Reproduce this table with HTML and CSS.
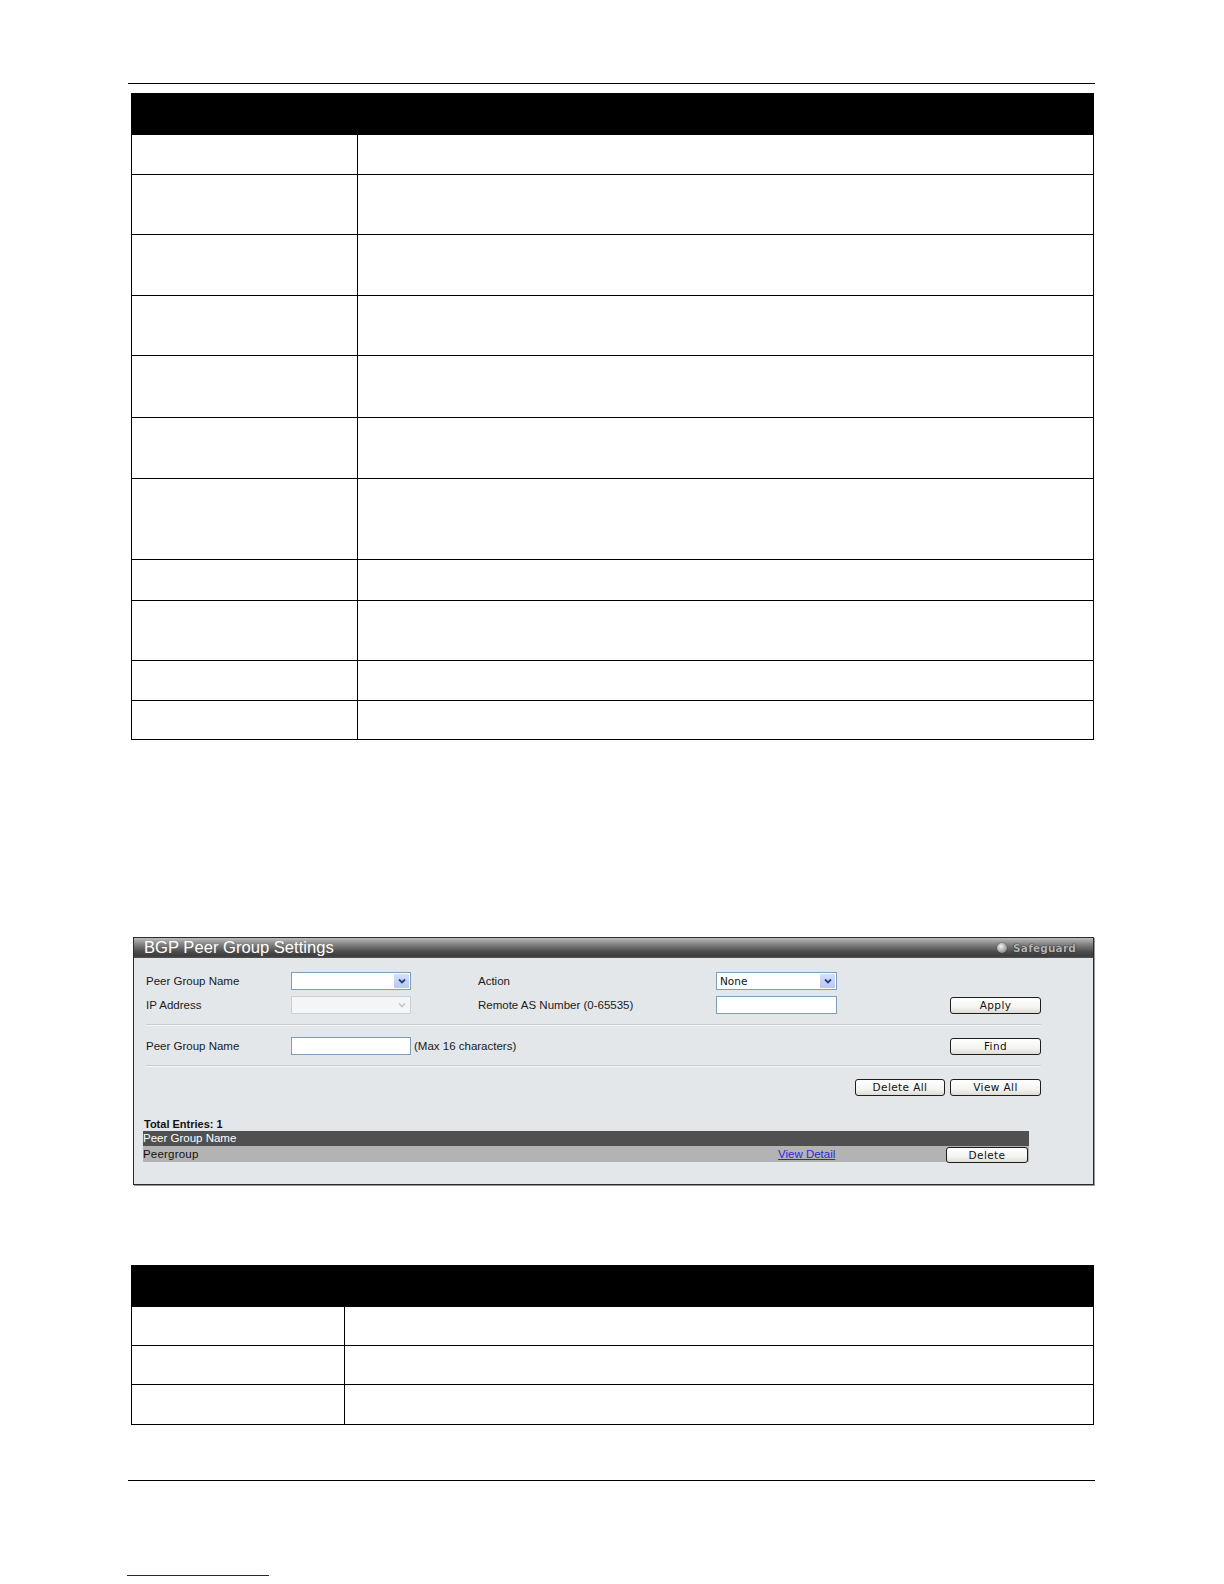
FILE: index.html
```html
<!DOCTYPE html>
<html>
<head>
<meta charset="utf-8">
<link rel="stylesheet" href="styles.css">
</head>
<body>
<div class="page">
  <div class="rule rule-top"></div>

  <table class="doc-table t1">
    <colgroup><col class="c1a"><col></colgroup>
    <tr class="head"><th colspan="2"></th></tr>
    <tr class="r40"><td></td><td></td></tr>
    <tr class="r60"><td></td><td></td></tr>
    <tr class="r61"><td></td><td></td></tr>
    <tr class="r60"><td></td><td></td></tr>
    <tr class="r62"><td></td><td></td></tr>
    <tr class="r61"><td></td><td></td></tr>
    <tr class="r81"><td></td><td></td></tr>
    <tr class="r41"><td></td><td></td></tr>
    <tr class="r60"><td></td><td></td></tr>
    <tr class="r40"><td></td><td></td></tr>
    <tr class="r39"><td></td><td></td></tr>
  </table>

  <div class="panel">
    <div class="titlebar">
      <span class="title">BGP Peer Group Settings</span>
      <span class="safeguard"><span class="sg-dot"></span><span class="sg-text">Safeguard</span></span>
    </div>
    <div class="panel-body">
      <div class="form-grid">
        <span class="lbl">Peer Group Name</span>
        <span class="select"><span class="sel-val"></span><span class="sel-arrow"><svg viewBox="0 0 10 10" width="10" height="10"><path d="M2 3.5 L5 6.5 L8 3.5" fill="none" stroke="#2b3f7a" stroke-width="1.8"/></svg></span></span>
        <span></span>
        <span class="lbl">Action</span>
        <span class="select"><span class="sel-val">None</span><span class="sel-arrow"><svg viewBox="0 0 10 10" width="10" height="10"><path d="M2 3.5 L5 6.5 L8 3.5" fill="none" stroke="#2b3f7a" stroke-width="1.8"/></svg></span></span>
        <span></span>
        <span></span>

        <span class="lbl">IP Address</span>
        <span class="select disabled"><span class="sel-val"></span><span class="sel-arrow"><svg viewBox="0 0 10 10" width="10" height="10"><path d="M2 3.5 L5 6.5 L8 3.5" fill="none" stroke="#c4c8cc" stroke-width="1.6"/></svg></span></span>
        <span></span>
        <span class="lbl">Remote AS Number (0-65535)</span>
        <span class="input"></span>
        <span></span>
        <button class="btn">Apply</button>
      </div>
      <div class="sep"></div>
      <div class="form-grid row3">
        <span class="lbl">Peer Group Name</span>
        <span class="input"></span>
        <span class="hint">(Max 16 characters)</span>
        <button class="btn">Find</button>
      </div>
      <div class="sep sep2"></div>
      <div class="btn-row">
        <button class="btn">Delete All</button>
        <button class="btn">View All</button>
      </div>
      <div class="list">
        <div class="total">Total Entries: 1</div>
        <div class="list-head">Peer Group Name</div>
        <div class="list-row">
          <span class="name">Peergroup</span>
          <a class="link" href="#">View Detail</a>
          <button class="btn btn-del">Delete</button>
        </div>
      </div>
    </div>
  </div>

  <table class="doc-table t2">
    <colgroup><col class="c2a"><col></colgroup>
    <tr class="head"><th colspan="2"></th></tr>
    <tr class="r39"><td></td><td></td></tr>
    <tr class="r39"><td></td><td></td></tr>
    <tr class="r40"><td></td><td></td></tr>
  </table>

  <div class="rule rule-bottom"></div>
  <div class="footnote-line"></div>
</div>
</body>
</html>
```

FILE: styles.css
```css
html, body {
  margin: 0;
  padding: 0;
  background: #ffffff;
}
body {
  font-family: "Liberation Sans", Arial, sans-serif;
  width: 1224px;
  height: 1584px;
  overflow: hidden;
}
.page {
  padding-left: 128px;
  width: 967px;
}
.rule {
  height: 1px;
  background: #000;
}
.rule-top {
  margin-top: 83px;
}

/* document tables */
.doc-table {
  border-collapse: collapse;
  table-layout: fixed;
  margin-left: 3px;
  width: 963px;
}
.t1 { margin-top: 9px; }
.doc-table th {
  background: #000;
  height: 40px;
  padding: 0;
  border: 1px solid #000;
}
.doc-table td {
  border: 1px solid #000;
  padding: 0;
}
.c1a { width: 226px; }
.c2a { width: 213px; }
.r39 td { height: 38px; }
.r40 td { height: 39px; }
.r41 td { height: 40px; }
.r60 td { height: 59px; }
.r61 td { height: 60px; }
.r62 td { height: 61px; }
.r81 td { height: 80px; }

/* panel */
.panel {
  margin-top: 197px;
  margin-left: 5px;
  width: 959px;
  height: 246px;
  border: 1px solid #2a2a2a;
  box-shadow: 1px 1px 0 #9a9a9a;
  background: #e3e7ea;
}
.titlebar {
  height: 20px;
  background: linear-gradient(to bottom, #bdbdbd 0%, #858585 30%, #4a4a4a 70%, #3c3c3c 90%, #555 100%);
  display: flex;
  align-items: center;
  justify-content: space-between;
  padding: 0 17px 0 10px;
}
.title {
  color: #fff;
  font-size: 16.6px;
  line-height: 20px;
  letter-spacing: 0;
}
.safeguard {
  display: flex;
  align-items: center;
  gap: 6px;
}
.sg-dot {
  width: 10px;
  height: 10px;
  border-radius: 50%;
  background: radial-gradient(circle at 40% 35%, #f2f2f2 0%, #b5b5b5 45%, #6a6a6a 100%);
  box-shadow: 0 0 1px #222;
}
.sg-text {
  font-family: "DejaVu Sans", Verdana, sans-serif;
  font-size: 10.5px;
  font-weight: bold;
  color: #b4b4b4;
  text-shadow: 0 0 1px #1a1a1a, 0 0 1px #1a1a1a;
  letter-spacing: 0.2px;
}
.panel-body {
  padding: 14px 0 0 9px;
}
.form-grid {
  display: grid;
  grid-template-columns: 145px 120px 67px 238px 121px 113px 91px;
  grid-auto-rows: 18px;
  row-gap: 6px;
  align-items: center;
  padding-left: 3px;
}
.form-grid.row3 {
  grid-template-columns: 145px 120px 539px 91px;
}
.lbl, .hint {
  font-size: 11.5px;
  color: #1a1a1a;
  line-height: 18px;
}
.hint {
  padding-left: 3px;
}
.select {
  display: flex;
  height: 18px;
  box-sizing: border-box;
  border: 1px solid #7f9db9;
  background: #fff;
}
.sel-val {
  flex: 1;
  font-family: "DejaVu Sans", Verdana, sans-serif;
  font-size: 10.5px;
  line-height: 16px;
  padding-left: 3px;
  color: #111;
}
.sel-arrow {
  width: 15px;
  height: 14px;
  margin: 1px;
  background: linear-gradient(to bottom, #d4e0fb, #b6c9f3);
  border-radius: 1px;
  display: flex;
  align-items: center;
  justify-content: center;
}
.select.disabled {
  border-color: #c9d1d8;
  background: #f4f5f6;
}
.select.disabled .sel-arrow {
  background: #f4f5f6;
}
.input {
  height: 18px;
  box-sizing: border-box;
  border: 1px solid #7f9db9;
  background: #fff;
}
.btn {
  height: 17px;
  box-sizing: border-box;
  border: 1px solid #1e1e1e;
  border-radius: 3px;
  background: linear-gradient(to bottom, #ffffff 0%, #f4f4f2 60%, #dedcd4 100%);
  font-family: "DejaVu Sans", Verdana, sans-serif;
  font-size: 10.5px;
  letter-spacing: 0.4px;
  color: #111;
  padding: 0;
  line-height: 15px;
  width: 91px;
}
.sep {
  margin: 10px 0 0 3px;
  width: 895px;
  height: 1px;
  background: #c6ccd1;
  border-bottom: 1px solid #f3f5f6;
  margin-bottom: 11px;
}
.sep2 {
  margin-top: 10px;
  margin-bottom: 12px;
}
.btn-row {
  display: flex;
  gap: 5px;
  padding-left: 712px;
}
.btn-row .btn {
  width: 91px;
}
.btn-row .btn:first-child {
  width: 90px;
}
.list {
  margin-top: 21px;
}
.total {
  font-size: 11px;
  font-weight: bold;
  color: #111;
  line-height: 14px;
  padding-left: 1px;
}
.list-head {
  width: 886px;
  height: 15px;
  background: #505050;
  color: #fff;
  font-size: 11.5px;
  line-height: 15px;
}
.list-row {
  width: 886px;
  height: 16px;
  background: #b3b3b3;
  display: flex;
  align-items: center;
  font-size: 11.5px;
  color: #111;
}
.name {
  width: 635px;
  letter-spacing: 0.2px;
}
.link {
  width: 168px;
  color: #2a2ad6;
  text-decoration: underline;
  font-size: 11.5px;
}
.btn-del {
  width: 82px;
  height: 16px;
  margin-top: 1px;
}

.t2 { margin-top: 80px; }
.rule-bottom {
  margin-top: 55px;
}
.footnote-line {
  margin-top: 94px;
  margin-left: -1px;
  width: 142px;
  height: 1px;
  background: #1a1a9a;
}
```
